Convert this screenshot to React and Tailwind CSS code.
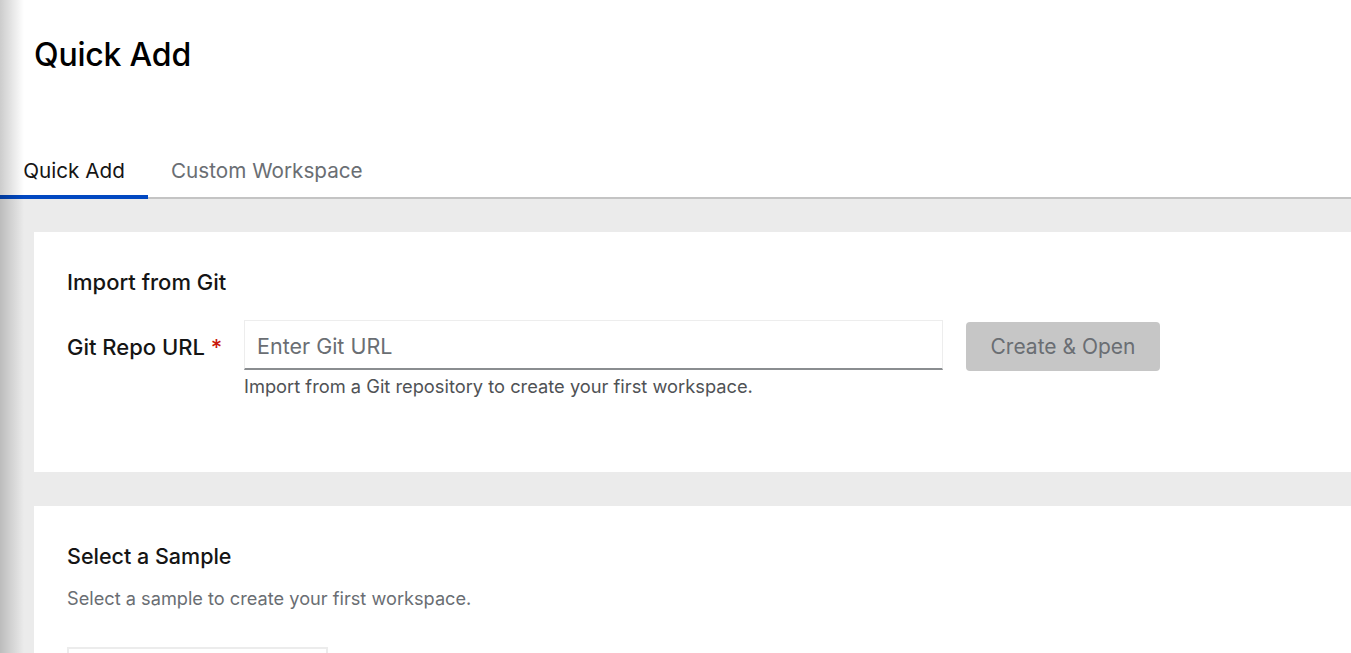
import React, { useState } from 'react';

export default function App() {
  const [tab, setTab] = useState('quick');
  const [url, setUrl] = useState('');

  return (
    <div className="relative min-h-screen bg-white text-[#151515] font-['Inter','Noto_Sans',sans-serif]">
      {/* ── Left edge shadow from the collapsed nav ─────────────── */}
      <div className="pointer-events-none absolute inset-y-0 left-0 z-10 w-[24px] bg-linear-to-r from-black/20 to-transparent" />

      {/* ── Page header ───────────────────────────────────────── */}
      <header className="px-[34px] pt-[35px]">
        <h1 className="text-[32px] font-medium leading-[40px] tracking-[-0.2px] text-black">Quick Add</h1>
      </header>

      {/* ── Tabs ──────────────────────────────────────────────── */}
      <nav className="mt-[68px] flex border-b-2 border-[#c4c4c4]">
        <button
          onClick={() => setTab('quick')}
          className={`-mb-[2px] h-[56px] w-[148px] pt-[4px] text-[20.7px] border-b-4 ${tab === 'quick' ? 'border-[#0148c1] text-[#151515]' : 'border-transparent text-[#6a6e73]'}`}>
          Quick Add
        </button>
        <button
          onClick={() => setTab('custom')}
          className={`-mb-[2px] h-[56px] px-[23px] pt-[4px] text-[20.7px] border-b-4 ${tab === 'custom' ? 'border-[#0148c1] text-[#151515]' : 'border-transparent text-[#6a6e73]'}`}>
          Custom Workspace
        </button>
      </nav>

      {/* ── Content area ──────────────────────────────────────── */}
      <main className="flex flex-col gap-[34px] bg-[#ebebeb] pl-[34px] pt-[33px] pb-[40px]">
        <section className="h-[240px] bg-white px-[33px] pt-[35px]">
          <h2 className="text-[22px] font-medium leading-[30px]">Import from Git</h2>
          <div className="mt-[23px] flex items-start">
            <label className="w-[177px] pt-[12px] text-[22px] font-medium leading-[30px]">
              Git Repo URL <span className="text-[#c9190b]">*</span>
            </label>
            <div className="w-[699px]">
              <input
                value={url}
                onChange={e => setUrl(e.target.value)}
                placeholder="Enter Git URL"
                className="h-[50px] w-full border border-[#ededed] border-b-2 border-b-[#8a8d90] px-[12px] pt-[3px] text-[21.5px] text-[#151515] placeholder:text-[#6a6e73] outline-none"
              />
              <p className="mt-[3px] text-[18.3px] leading-[26px] text-[#4f5255]">
                Import from a Git repository to create your first workspace.
              </p>
            </div>
            <button
              disabled={!url}
              className="ml-[23px] mt-[2px] h-[49px] w-[194px] rounded-[4px] bg-[#c6c6c6] text-[21px] text-[#6a6e73]">
              Create &amp; Open
            </button>
          </div>
        </section>

        <section className="min-h-[200px] bg-white px-[33px] pt-[35px]">
          <h2 className="text-[21.5px] font-medium leading-[30px]">Select a Sample</h2>
          <p className="mt-[14px] text-[18.2px] leading-[26px] text-[#6a6e73]">
            Select a sample to create your first workspace.
          </p>
          <div className="mt-[36px] h-[120px] w-[261px] border-2 border-[#ececec]" />
        </section>
      </main>
    </div>
  );
}
